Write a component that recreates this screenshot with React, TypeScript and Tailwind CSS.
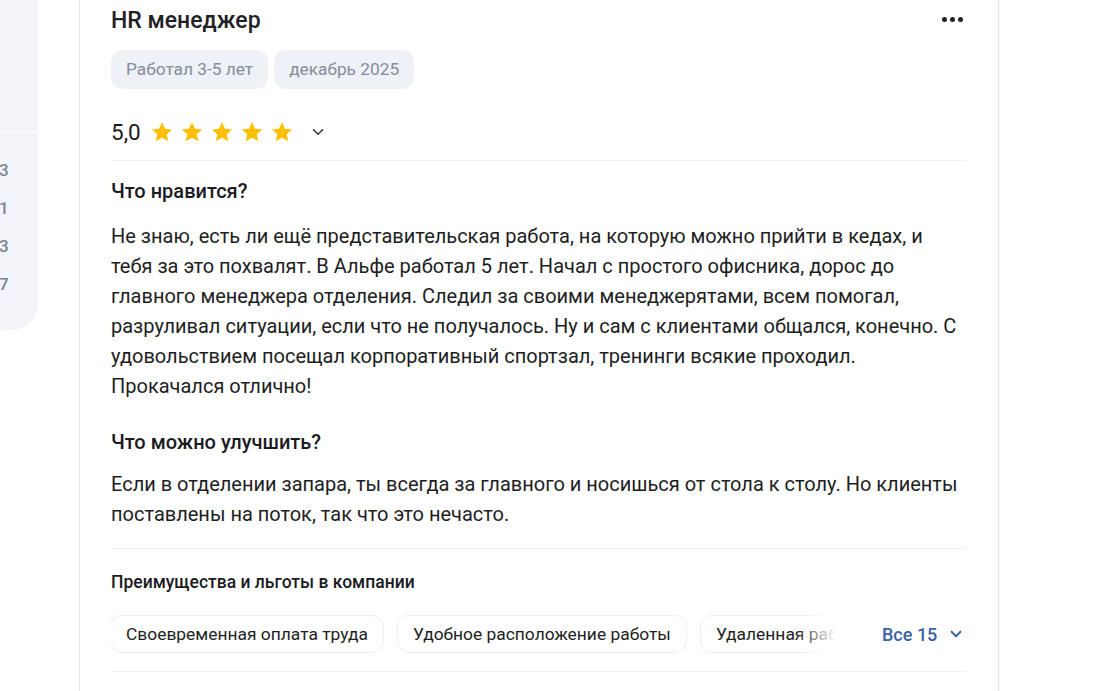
import { ChevronDown } from 'lucide-react'

const stats = ['3', '1', '3', '7']

const benefits = ['Своевременная оплата труда', 'Удобное расположение работы', 'Удаленная работа']

function Star() {
  return (
    <svg viewBox="0 0 24 24" className="w-[24px] h-[24px]" fill="#ffbf00">
      <path d="M12 2.2l2.95 6.55 7.15.72-5.37 4.8 1.55 7.03L12 17.65 5.72 21.3l1.55-7.03L1.9 9.47l7.15-.72z" />
    </svg>
  )
}

export default function App() {
  return (
    <div className="flex h-[691px] bg-white overflow-hidden font-['Roboto','Liberation_Sans',sans-serif] text-[#1a1b1f]">
      {/* Left sidebar (clipped) */}
      <div className="w-[38px] shrink-0 self-start h-[330px] bg-[#f3f4f9] rounded-br-[26px] overflow-hidden">
        <div className="h-[132px] border-b border-white" />
        <div className="flex flex-col pt-[26px] gap-[14px]">
          {stats.map((n, i) => (
            <div key={i} className="text-[17px] leading-[24px] text-[#7c8494] font-medium -ml-[1px]">
              {n}
            </div>
          ))}
        </div>
      </div>

      {/* Review card */}
      <div className="ml-[41px] w-[920px] shrink-0 border-x border-[#e3e5ee] px-[31px]">
        <div className="flex items-center justify-between pt-[7px]">
          <h2 className="text-[23px] leading-[28px] font-medium text-[#1f2127]">HR менеджер</h2>
          <div className="flex gap-[3px] mr-[4px] -mt-[3px]">
            <span className="w-[5px] h-[5px] rounded-full bg-[#1f2127]" />
            <span className="w-[5px] h-[5px] rounded-full bg-[#1f2127]" />
            <span className="w-[5px] h-[5px] rounded-full bg-[#1f2127]" />
          </div>
        </div>

        <div className="flex gap-[6px] mt-[15px]">
          <span className="h-[39px] px-[15px] flex items-center rounded-[12px] bg-[#eef1f6] text-[17.3px] text-[#858d9b]">
            Работал 3-5 лет
          </span>
          <span className="h-[39px] px-[15px] flex items-center rounded-[12px] bg-[#eef1f6] text-[17.3px] text-[#858d9b]">
            декабрь 2025
          </span>
        </div>

        <div className="flex items-center h-[28px] mt-[29px]">
          <span className="text-[22.5px] leading-[28px] text-[#1a1b1f]">5,0</span>
          <div className="flex gap-[6px] ml-[9px]">
            {[0, 1, 2, 3, 4].map((i) => (
              <Star key={i} />
            ))}
          </div>
          <ChevronDown className="w-[18px] h-[18px] ml-[15px] text-[#3a3c42]" strokeWidth={2.2} />
        </div>

        <div className="border-t border-[#eef0f4] mt-[14px]" />

        <h3 className="mt-[18px] text-[20px] leading-[24px] font-medium">Что нравится?</h3>
        <p className="mt-[18px] text-[20px] leading-[30px] text-[#1d1e22]">
          Не знаю, есть ли ещё представительская работа, на которую можно прийти в кедах, и тебя за это
          похвалят. В Альфе работал 5 лет. Начал с простого офисника, дорос до главного менеджера
          отделения. Следил за своими менеджерятами, всем помогал, разруливал ситуации, если что не
          получалось. Ну и сам с клиентами общался, конечно. С удовольствием посещал корпоративный
          спортзал, тренинги всякие проходил. Прокачался отлично!
        </p>

        <h3 className="mt-[29px] text-[20px] leading-[24px] font-medium">Что можно улучшить?</h3>
        <p className="mt-[15px] text-[20px] leading-[30px] text-[#1d1e22]">
          Если в отделении запара, ты всегда за главного и носишься от стола к столу. Но клиенты
          поставлены на поток, так что это нечасто.
        </p>

        <div className="border-t border-[#eef0f4] mt-[19px]" />

        <h4 className="mt-[22px] text-[17.5px] leading-[22px] font-medium">Преимущества и льготы в компании</h4>

        <div className="flex items-center mt-[22px]">
          <div className="relative w-[725px] overflow-hidden">
            <div className="flex gap-[13px] -ml-[1px]">
              {benefits.map((b) => (
                <span
                  key={b}
                  className="shrink-0 h-[38px] px-[15px] flex items-center rounded-[12px] border border-[#eceef5] bg-white text-[17.4px] text-[#1d1e22]"
                >
                  {b}
                </span>
              ))}
            </div>
            <div className="absolute right-0 top-0 h-full w-[40px] bg-gradient-to-r from-white/0 to-white" />
          </div>
          <button className="ml-[46px] flex items-center gap-[10px] text-[18px] font-medium text-[#3a63a8]">
            Все 15
            <ChevronDown className="w-[18px] h-[18px]" strokeWidth={2.5} />
          </button>
        </div>

        <div className="border-t border-[#eef0f4] mt-[18px]" />
      </div>
    </div>
  )
}
